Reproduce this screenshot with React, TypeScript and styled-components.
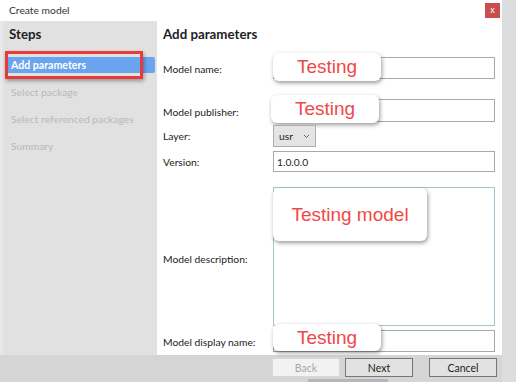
import React from "react";
import styled, { createGlobalStyle } from "styled-components";

const Global = createGlobalStyle`
  html, body { margin: 0; padding: 0; background: #dcdcdc; }
  body { font-family: Lato, "Noto Sans", "Liberation Sans", sans-serif; }
  * { box-sizing: border-box; }
`;

const Window = styled.div`
  width: 516px;
  height: 382px;
  display: flex;
  background: #dcdcdc;
  overflow: hidden;
`;

const Main = styled.div`
  width: 502px;
  display: flex;
  flex-direction: column;
`;

const Strip = styled.div`
  flex: 1;
  background: #dcdddf;
`;

const TitleBar = styled.div`
  height: 21px;
  background: #ffffff;
  display: flex;
  align-items: center;
  justify-content: space-between;
  padding: 0 2px 2px 9px;
  font-size: 10.3px;
  color: #333;
`;

const CloseBtn = styled.div`
  width: 15px;
  height: 15px;
  margin-top: 2px;
  background: #c94f4f;
  color: #fff;
  font-size: 9px;
  line-height: 14px;
  text-align: center;
  font-family: "Liberation Sans", sans-serif;
`;

const Body = styled.div`
  flex: 1;
  display: flex;
  min-height: 0;
`;

const Sidebar = styled.div`
  width: 157px;
  background: #e1e1e1;
  border-left: 3px solid #e8e8e8;
  position: relative;
  display: flex;
  flex-direction: column;
`;

const PanelTitle = styled.div<{ $pad: number }>`
  height: 26px;
  display: flex;
  align-items: center;
  padding-left: ${(p) => p.$pad}px;
  font-weight: 700;
  font-size: 13.3px;
  color: #222;
`;

const StepList = styled.div`
  display: flex;
  flex-direction: column;
  padding-top: 10px;
  gap: 11px;
`;

const Step = styled.div<{ $active?: boolean }>`
  height: 16px;
  margin-left: 3px;
  margin-right: 2px;
  padding-left: 5px;
  display: flex;
  align-items: center;
  font-size: ${(p) => (p.$active ? 10.6 : 10.3)}px;
  border-radius: 2px;
  background: ${(p) => (p.$active ? "#6aa3ee" : "transparent")};
  color: ${(p) => (p.$active ? "#ffffff" : "#b9b9b9")};
  font-weight: ${(p) => (p.$active ? 700 : 400)};
`;

const RedBox = styled.div`
  position: absolute;
  left: 2px;
  top: 30px;
  width: 138px;
  height: 28px;
  border: 3px solid #e53b3b;
  box-shadow: 1px 2px 4px rgba(0, 0, 0, 0.35);
`;

const Content = styled.div`
  flex: 1;
  background: #ffffff;
  padding: 0 7px 0 6px;
  display: flex;
  flex-direction: column;
`;

const Row = styled.div<{ $mt: number }>`
  display: flex;
  align-items: center;
  margin-top: ${(p) => p.$mt}px;
`;

const Label = styled.div<{ $pt?: number }>`
  width: 110px;
  font-size: 10.3px;
  color: #222;
  padding-top: ${(p) => p.$pt ?? 0}px;
`;

const Field = styled.div`
  position: relative;
  flex: 1;
  display: flex;
`;

const Input = styled.div<{ $h: number }>`
  flex: 1;
  height: ${(p) => p.$h}px;
  border: 1px solid #a9a9a9;
  background: #fff;
  font-size: 10.3px;
  color: #222;
  display: flex;
  align-items: center;
  padding-left: 3px;
`;

const TextArea = styled.div`
  flex: 1;
  height: 139px;
  border: 1px solid #a7c3cc;
  background: #fff;
`;

const Select = styled.div`
  width: 43px;
  height: 22px;
  border: 1px solid #adadad;
  background: #e4e4e4;
  display: flex;
  align-items: center;
  justify-content: space-between;
  padding: 0 5px 0 5px;
  font-size: 10.3px;
  color: #222;
`;

const Callout = styled.div<{ $l: number; $t: number; $w: number; $h: number }>`
  position: absolute;
  left: ${(p) => p.$l}px;
  top: ${(p) => p.$t}px;
  width: ${(p) => p.$w}px;
  height: ${(p) => p.$h}px;
  background: #fff;
  border-radius: 6px;
  box-shadow: 1px 2px 4px rgba(0, 0, 0, 0.4);
  display: flex;
  align-items: center;
  justify-content: center;
  font-family: "Liberation Sans", Arial, sans-serif;
  font-size: 19px;
  color: #f04848;
`;

const Footer = styled.div`
  height: 27px;
  background: #d5d5d5;
  display: flex;
  flex-direction: column;
  padding-top: 3px;
`;

const ButtonRow = styled.div`
  display: flex;
  justify-content: flex-end;
  padding-right: 5px;
  height: 19px;
`;

const Button = styled.div<{ $disabled?: boolean; $ml: number }>`
  width: 68px;
  height: 19px;
  margin-left: ${(p) => p.$ml}px;
  display: flex;
  align-items: center;
  justify-content: center;
  font-size: 10.5px;
  background: ${(p) => (p.$disabled ? "#f2f2f2" : "#e2e2e2")};
  border: 1px solid ${(p) => (p.$disabled ? "#d8d8d8" : "#767676")};
  color: ${(p) => (p.$disabled ? "#a8a8a8" : "#222")};
`;

const Underbar = styled.div`
  margin-top: 2px;
  margin-left: 308px;
  width: 80px;
  height: 3px;
  background: #b3b6bd;
`;

function Chevron() {
  return (
    <svg width="7" height="5" viewBox="0 0 7 5">
      <path d="M1 1 L3.5 3.5 L6 1" fill="none" stroke="#666" strokeWidth="1" />
    </svg>
  );
}

export default function App() {
  return (
    <>
      <Global />
      <Window>
        <Main>
          <TitleBar>
            <span>Create model</span>
            <CloseBtn>x</CloseBtn>
          </TitleBar>
          <Body>
            <Sidebar>
              <PanelTitle $pad={6}>Steps</PanelTitle>
              <StepList>
                <Step $active>Add parameters</Step>
                <Step>Select package</Step>
                <Step>Select referenced packages</Step>
                <Step>Summary</Step>
              </StepList>
              <RedBox />
            </Sidebar>
            <Content>
              <PanelTitle $pad={0}>Add parameters</PanelTitle>
              <Row $mt={10}>
                <Label $pt={2}>Model name:</Label>
                <Field>
                  <Input $h={22} />
                  <Callout $l={0} $t={-4} $w={108} $h={28}>Testing</Callout>
                </Field>
              </Row>
              <Row $mt={20}>
                <Label $pt={2}>Model publisher:</Label>
                <Field>
                  <Input $h={23} />
                  <Callout $l={-2} $t={-4} $w={108} $h={28}>Testing</Callout>
                </Field>
              </Row>
              <Row $mt={3}>
                <Label>Layer:</Label>
                <Field>
                  <Select>
                    <span>usr</span>
                    <Chevron />
                  </Select>
                </Field>
              </Row>
              <Row $mt={4}>
                <Label>Version:</Label>
                <Field>
                  <Input $h={21}>1.0.0.0</Input>
                </Field>
              </Row>
              <Row $mt={15}>
                <Label $pt={4}>Model description:</Label>
                <Field>
                  <TextArea />
                  <Callout $l={0} $t={1} $w={154} $h={53}>Testing model</Callout>
                </Field>
              </Row>
              <Row $mt={4}>
                <Label $pt={2}>Model display name:</Label>
                <Field>
                  <Input $h={22} />
                  <Callout $l={0} $t={-6} $w={108} $h={27}>Testing</Callout>
                </Field>
              </Row>
            </Content>
          </Body>
          <Footer>
            <ButtonRow>
              <Button $disabled $ml={0}>Back</Button>
              <Button $ml={5}>Next</Button>
              <Button $ml={16}>Cancel</Button>
            </ButtonRow>
            <Underbar />
          </Footer>
        </Main>
        <Strip />
      </Window>
    </>
  );
}
